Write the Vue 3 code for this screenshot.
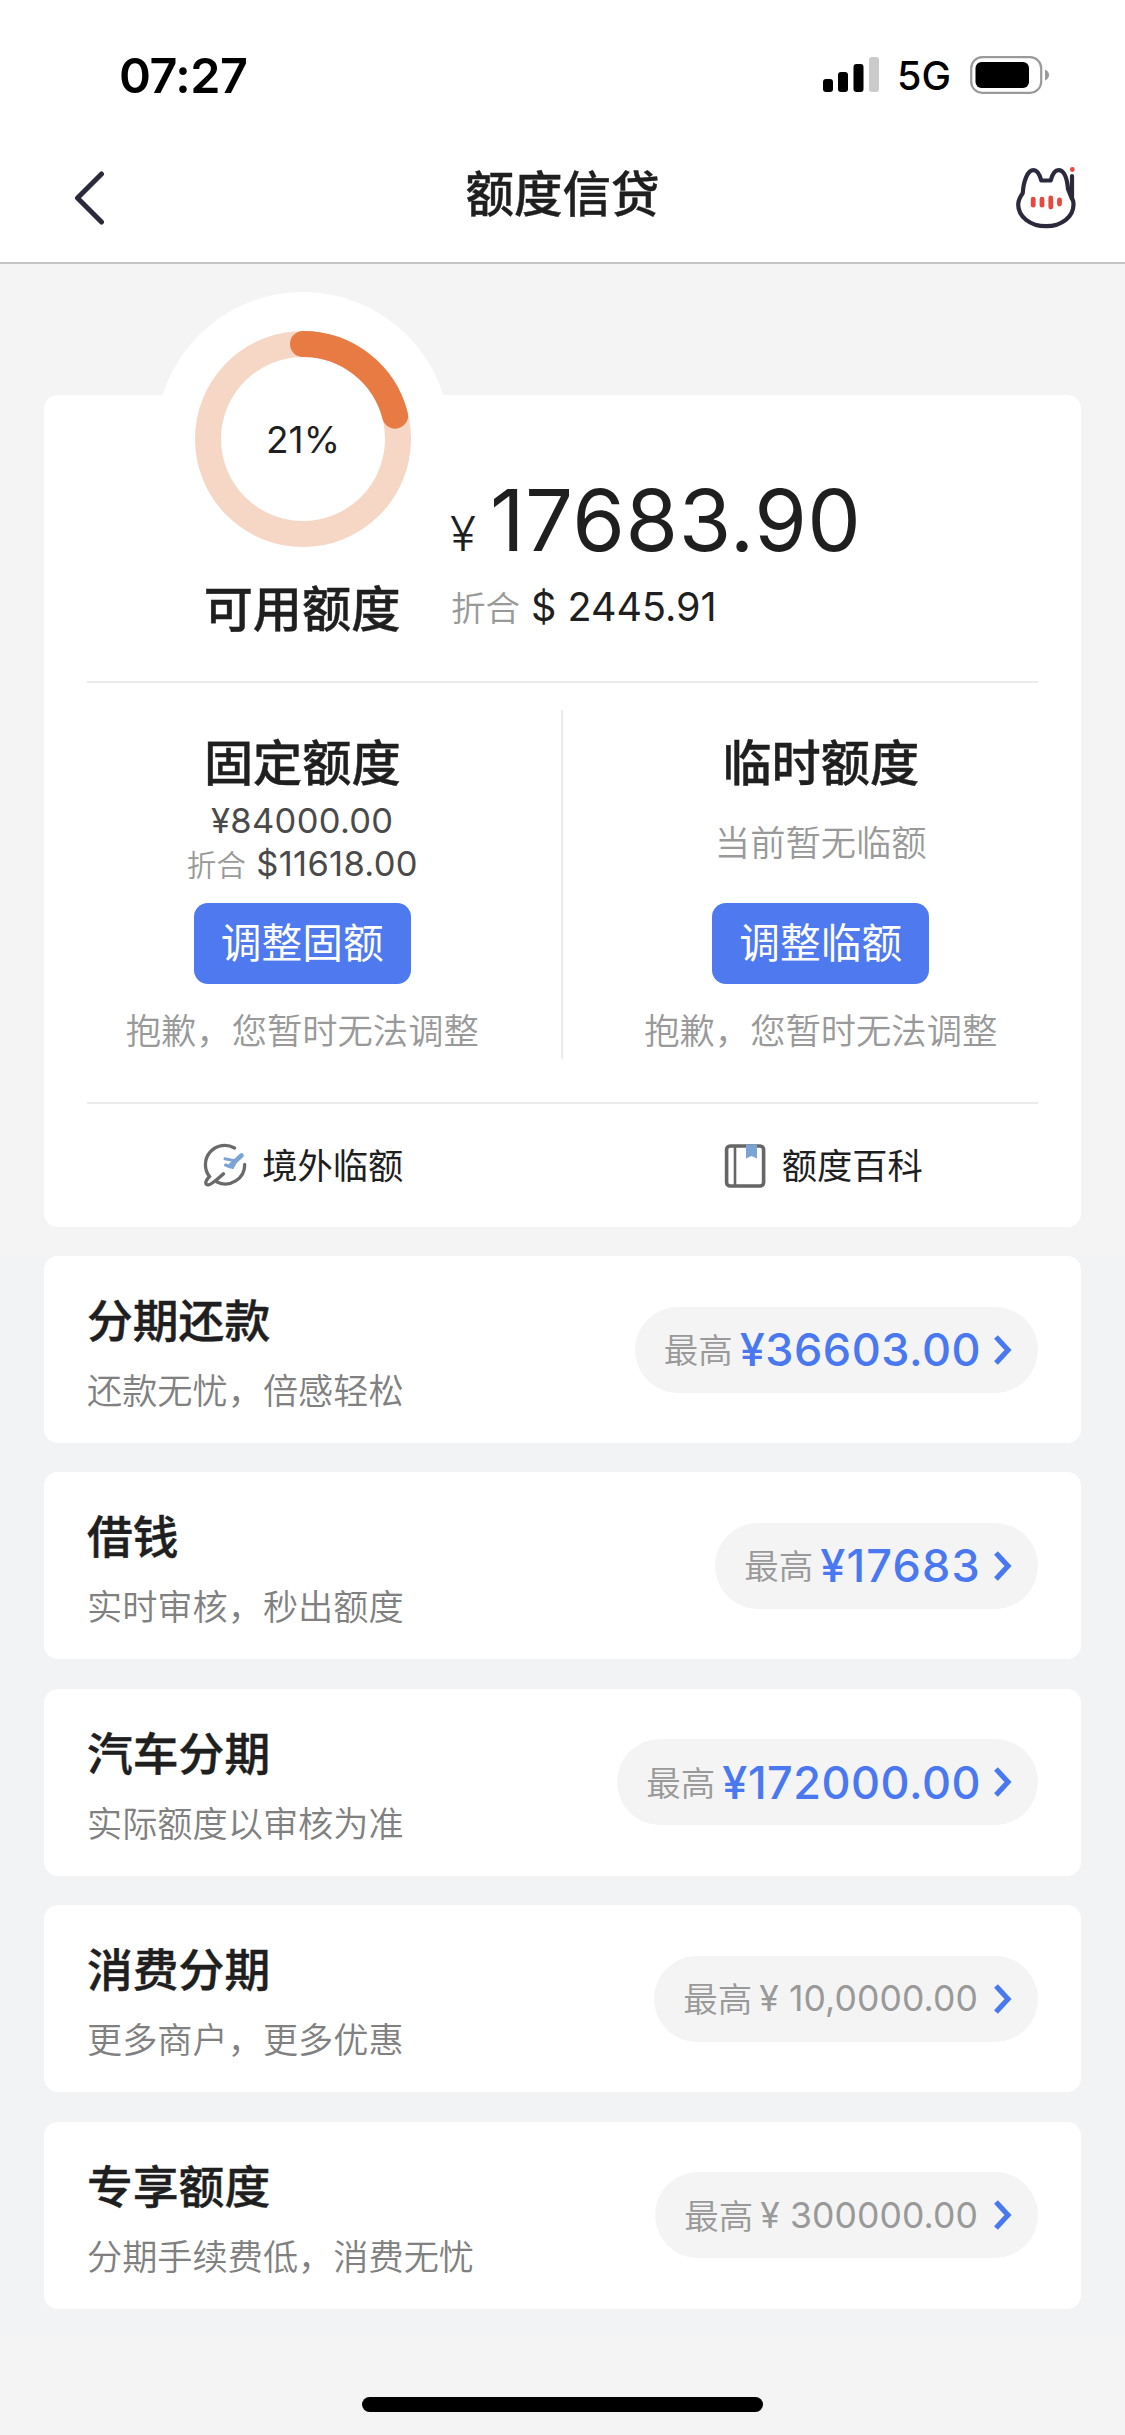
<script setup>
const columns = [
  {
    title: '固定额度',
    amount: '¥84000.00',
    converted: '$11618.00',
    action: '调整固额',
  },
  { title: '临时额度', empty: '当前暂无临额', action: '调整临额' },
]

const products = [
  { title: '分期还款', desc: '还款无忧，倍感轻松', amount: '¥36603.00', active: true },
  { title: '借钱', desc: '实时审核，秒出额度', amount: '¥17683', active: true, whole: true },
  { title: '汽车分期', desc: '实际额度以审核为准', amount: '¥172000.00', active: true },
  { title: '消费分期', desc: '更多商户，更多优惠', amount: '¥ 10,0000.00', active: false },
  { title: '专享额度', desc: '分期手续费低，消费无忧', amount: '¥ 300000.00', active: false },
]

const percent = 21
const circumference = 2 * Math.PI * 95
const dash = `${(circumference * percent) / 100} ${circumference}`
</script>

<template>
  <div class="page">
    <header class="header">
      <div class="status">
        <span class="time">07:27</span>
        <div class="status-right">
          <svg class="signal" width="56" height="36" viewBox="0 0 56 36">
            <rect x="0" y="22" width="10" height="13" rx="3" />
            <rect x="15" y="15" width="10" height="20" rx="3" />
            <rect x="30.5" y="7" width="10" height="28" rx="3" />
            <rect x="46" y="0" width="10" height="35" rx="3" fill="#cbcbcb" />
          </svg>
          <span class="network">5G</span>
          <svg class="battery" width="80" height="38" viewBox="0 0 80 38">
            <rect x="1.2" y="1.2" width="70" height="35.6" rx="11" fill="none" stroke="#9a9a9a" stroke-width="2.2" />
            <rect x="5.5" y="6" width="53.5" height="26" rx="6" />
            <path d="M75 13.500q4 1.600 4 5.500t-4 5.500z" fill="#9a9a9a" />
          </svg>
        </div>
      </div>
      <nav class="nav">
        <svg class="back" width="32" height="56" viewBox="0 0 32 56">
          <path d="M27.500 4L3.500 28l24 24" fill="none" stroke="#2b2a3d" stroke-width="5" stroke-linecap="round" stroke-linejoin="round" />
        </svg>
        <h1>额度信贷</h1>
        <svg class="cat" width="62" height="64" viewBox="0 0 62 64">
          <path
            d="M57 11v22q1.500 3 1.500 6.500C58.500 51.500 47 61.200 31 61.200S3.200 51.500 3.200 39.500q0-5 4.600-11.500C8.500 16 12.500 5.200 18.500 5.200c4.500 0 6.300 5 7.800 10.300h9.400C37.200 10 39 5.200 43.500 5.200c5.500 0 8.500 8 9.500 18.800l4 10"
            fill="none"
            stroke="#2b2a3d"
            stroke-width="4.200"
            stroke-linecap="round"
            stroke-linejoin="round"
          />
          <g stroke="#e8493f" stroke-width="4.800" stroke-linecap="round">
            <path d="M18.200 34.200v6M27 34.200v6M35.800 33v9M44.500 35v4" />
          </g>
          <circle cx="57.300" cy="4.500" r="2.400" fill="#e8493f" />
        </svg>
      </nav>
    </header>

    <main>
      <section class="quota">
        <div class="overview">
          <div class="gauge-col">
            <div class="gauge">
              <svg class="ring" width="294" height="294" viewBox="0 0 294 294">
                <circle cx="147" cy="147" r="95" fill="none" stroke="#f6d6c4" stroke-width="26" />
                <circle
                  cx="147"
                  cy="147"
                  r="95"
                  fill="none"
                  stroke="#e87a43"
                  stroke-width="26"
                  stroke-linecap="round"
                  :stroke-dasharray="dash"
                  transform="rotate(-90 147 147)"
                />
              </svg>
              <span class="percent">{{ percent }}%</span>
            </div>
            <h2>可用额度</h2>
          </div>
          <div class="balance">
            <div class="balance-main"><span class="yen">¥</span><span class="balance-num">17683.90</span></div>
            <div class="balance-sub"><span class="label">折合</span><span class="usd">$ 2445.91</span></div>
          </div>
        </div>

        <div class="columns">
          <div v-for="col in columns" :key="col.title" class="column">
            <h2>{{ col.title }}</h2>
            <div class="figures">
              <template v-if="col.amount">
                <div class="fixed">{{ col.amount }}</div>
                <div class="fixed"><span class="label">折合</span>{{ col.converted }}</div>
              </template>
              <div v-else class="empty">{{ col.empty }}</div>
            </div>
            <button class="adjust">{{ col.action }}</button>
            <p class="hint">抱歉，您暂时无法调整</p>
          </div>
        </div>

        <div class="links">
          <a class="link">
            <svg width="44" height="46" viewBox="0 0 44 46">
              <path
                d="M31.500 5A19.300 19.300 0 0 0 6.500 33.500Q2 38 3 41q1.500 2.500 7-1.500 5-3.500 10.500-8.700M14 39A19.300 19.300 0 0 0 41.700 21.500"
                fill="none"
                stroke="#6a6a6a"
                stroke-width="3.300"
                stroke-linecap="round"
              />
              <g fill="none" stroke="#7ba3d4" stroke-linecap="round" stroke-linejoin="round">
                <path d="M38.500 12.500L27.500 22.500" stroke-width="4.600" />
                <path d="M22 15.800l9 1.800M22.500 22l5 2" stroke-width="3" />
                <path d="M32.500 19l-3 5.500" stroke-width="3" />
              </g>
            </svg>
            <span>境外临额</span>
          </a>
          <a class="link">
            <svg width="44" height="46" viewBox="0 0 44 46">
              <rect x="3.600" y="3" width="37" height="40" rx="3.500" fill="none" stroke="#666" stroke-width="3.600" />
              <path d="M12 3v40" stroke="#666" stroke-width="2.600" />
              <path d="M23 1.500h11v14l-5.500-2.600-5.500 2.600z" fill="#7ba3d4" />
            </svg>
            <span>额度百科</span>
          </a>
        </div>
      </section>

      <section class="products">
        <article v-for="item in products" :key="item.title" class="product">
          <div class="product-text">
            <h3>{{ item.title }}</h3>
            <p>{{ item.desc }}</p>
          </div>
          <div class="pill" :class="{ active: item.active, whole: item.whole }">
            <span class="max">最高</span>
            <span class="amount">{{ item.amount }}</span>
            <svg width="20" height="30" viewBox="0 0 20 30">
              <path d="M3 2l12 13L3 28" fill="none" stroke="#4a78f0" stroke-width="5.200" />
            </svg>
          </div>
        </article>
      </section>
    </main>

    <footer class="home"><div class="home-bar"></div></footer>
  </div>
</template>

<style>
body {
  margin: 0;
  background: #f4f4f4;
}
</style>

<style scoped>
.page {
  display: flex;
  flex-direction: column;
  width: 1125px;
  height: 2435px;
  overflow: hidden;
  background: #f4f4f4;
  color: #1f1f1f;
  font-family: Inter, "Noto Sans CJK SC", sans-serif;
}
h1,
h2,
h3,
p {
  margin: 0;
  white-space: nowrap;
}
h1,
h2,
h3 {
  -webkit-text-stroke: 0.4px currentColor;
}
svg {
  display: block;
  flex: none;
}
.header {
  box-sizing: border-box;
  height: 264px;
  flex: none;
  background: #fff;
  border-bottom: 2px solid #c4c6c5;
}
.status {
  display: flex;
  justify-content: space-between;
  align-items: center;
  height: 150px;
  padding: 0 75px 0 119px;
  color: #000;
}
.time {
  font-size: 48.500px;
  font-weight: 600;
  letter-spacing: -0.5px;
}
.status-right {
  display: flex;
  align-items: center;
}
.network {
  margin: 2px 19px 0 18px;
  font-size: 39.500px;
  font-weight: 450;
  line-height: 40px;
}
.nav {
  display: flex;
  justify-content: space-between;
  align-items: center;
  height: 96px;
  padding: 0 48px 0 74px;
}
.cat {
  margin-top: -2px;
}
h1 {
  margin: -6px 0 0 4px;
  font-size: 48.500px;
  line-height: 60px;
  font-weight: 500;
}
.quota {
  display: flex;
  flex-direction: column;
  height: 832px;
  margin: 131px 44px 0;
  border-radius: 14px;
  background: #fff;
}
.overview {
  display: flex;
  height: 286px;
  margin: 0 43px;
  border-bottom: 2px solid #ebebeb;
}
.gauge-col {
  display: flex;
  flex-direction: column;
  align-items: center;
  width: 432px;
}
.gauge {
  display: grid;
  place-items: center;
  width: 294px;
  height: 294px;
  flex: none;
  margin-top: -103px;
  border-radius: 50%;
  background: #fff;
}
.gauge > * {
  grid-area: 1 / 1;
}
.percent {
  font-size: 37px;
}
h2 {
  font-size: 49.200px;
  line-height: 60px;
  font-weight: 500;
}
.gauge-col h2 {
  margin: -7px 2px 0 0;
}
.balance {
  margin: 81px 0 0 -68px;
  white-space: nowrap;
}
.balance-main {
  display: flex;
  align-items: baseline;
  line-height: 90px;
}
.yen {
  width: 40px;
  margin-left: -1px;
  font-size: 48px;
  font-weight: 350;
}
.balance-num {
  font-size: 85px;
  letter-spacing: 0.5px;
}
.balance-sub {
  display: flex;
  align-items: baseline;
  margin-top: 3px;
  line-height: 50px;
}
.label,
.empty,
.hint,
.max {
  color: #999;
  font-weight: 350;
}
.balance-sub .label {
  font-size: 34.500px;
  margin-right: 11px;
}
.usd {
  font-size: 39.500px;
}
.columns {
  display: flex;
  height: 349px;
  margin-top: 27px;
}
.column {
  display: flex;
  flex: 1 1 0;
  flex-direction: column;
  align-items: center;
  padding-right: 2px;
}
.column + .column {
  box-shadow: -2px 0 0 #ebebeb;
}
.column h2 {
  margin-top: 23px;
}
.figures {
  display: flex;
  flex-direction: column;
  justify-content: center;
  height: 95px;
  margin-top: 2px;
  text-align: center;
}
.fixed {
  color: #4a4a4a;
  font-size: 34.500px;
  line-height: 43px;
  letter-spacing: 0.3px;
  white-space: nowrap;
}
.fixed .label {
  margin-right: 10px;
  font-size: 29.500px;
}
.empty {
  padding-top: 2px;
  font-size: 35.300px;
  line-height: 48px;
}
.adjust {
  flex: none;
  width: 217px;
  height: 81px;
  margin-top: 13px;
  padding: 0;
  border: 0;
  border-radius: 14px;
  background: #4e79ef;
  color: #fff;
  font: 400 40.700px/78px Inter, "Noto Sans CJK SC", sans-serif;
}
.hint {
  margin-top: 22px;
  font-size: 35.300px;
  line-height: 52px;
}
.links {
  display: flex;
  flex: 1;
  margin: 43px 0 0;
  background: linear-gradient(#ebebeb, #ebebeb) 43px 0 / 951px 2px no-repeat;
}
.link {
  display: flex;
  flex: 1 1 0;
  justify-content: center;
  align-items: center;
  gap: 15px;
  padding-left: 1px;
  font-size: 35.300px;
}
.link + .link {
  padding-left: 3px;
}
.link span {
  margin-top: -3px;
}
.link svg {
  margin-top: 2px;
}
.products {
  display: flex;
  flex-direction: column;
  gap: 29.400px;
  margin-top: 29px;
  padding: 0 44px 28px;
  background: #f2f3f5;
}
.product {
  box-sizing: border-box;
  display: flex;
  justify-content: space-between;
  align-items: center;
  height: 187px;
  padding: 0 43px;
  border-radius: 14px;
  background: #fff;
}
.product-text {
  padding-top: 10px;
}
.product h3 {
  font-size: 45.800px;
  line-height: 60px;
  font-weight: 500;
}
.product p {
  margin-top: 13px;
  color: #808080;
  font-size: 35.200px;
  line-height: 52px;
  font-weight: 350;
}
.pill {
  display: flex;
  align-items: center;
  height: 86px;
  padding: 0 25px 0 29px;
  border-radius: 43px;
  background: #f4f4f4;
  white-space: nowrap;
}
.max {
  margin: -3px 7px 0 0;
  font-size: 34.500px;
}
.amount {
  margin-right: 15px;
  color: #999;
  font-size: 35.500px;
  font-weight: 400;
  letter-spacing: 0.1px;
}
.active .amount {
  margin-right: 12px;
  color: #4a78f0;
  font-size: 45px;
  font-weight: 500;
  letter-spacing: 0.5px;
}
.whole .amount {
  letter-spacing: 1.2px;
}
.home {
  display: flex;
  flex: 1;
  justify-content: center;
  align-items: flex-end;
  padding-bottom: 23px;
}
.home-bar {
  width: 401px;
  height: 15px;
  border-radius: 8px;
  background: #000;
}
</style>
